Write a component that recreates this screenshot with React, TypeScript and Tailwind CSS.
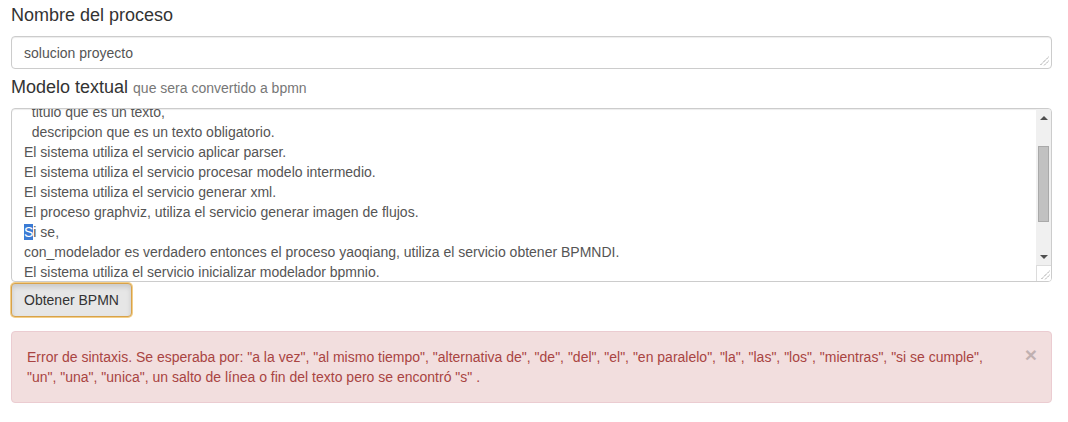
import React from "react";

const lines: React.ReactNode[] = [
  "  titulo que es un texto,",
  "  descripcion que es un texto obligatorio.",
  "El sistema utiliza el servicio aplicar parser.",
  "El sistema utiliza el servicio procesar modelo intermedio.",
  "El sistema utiliza el servicio generar xml.",
  "El proceso graphviz, utiliza el servicio generar imagen de flujos.",
  <>
    <span className="bg-[#3b7bd4] text-white">S</span>i se,
  </>,
  "con_modelador es verdadero entonces el proceso yaoqiang, utiliza el servicio obtener BPMNDI.",
  "El sistema utiliza el servicio inicializar modelador bpmnio.",
];

function ResizeGrip() {
  return (
    <svg width="10" height="10" viewBox="0 0 10 10" className="block">
      <line x1="9.5" y1="1" x2="1" y2="9.5" stroke="#8a8a8a" strokeWidth="1" strokeDasharray="1.2 0.8" />
      <line x1="9.5" y1="5" x2="5" y2="9.5" stroke="#8a8a8a" strokeWidth="1" strokeDasharray="1.2 0.8" />
    </svg>
  );
}

export default function App() {
  return (
    <div
      className="w-[1068px] h-[422px] bg-white pl-[11px] pr-[16px] text-[14px] leading-[20px] text-[#333]"
      style={{ fontFamily: '"Liberation Sans", Arial, sans-serif' }}
    >
      <div className="pt-[5px] text-[18px] leading-[20px] text-[#333]">Nombre del proceso</div>
      <div className="mt-[11px] h-[33px] border border-[#ccc] rounded-[4px] relative flex items-center px-[12px] text-[#555] shadow-[inset_0_1px_1px_rgba(0,0,0,0.075)]">
        solucion proyecto
        <div className="absolute right-[2px] bottom-[2px]">
          <ResizeGrip />
        </div>
      </div>
      <div className="mt-[8px] h-[20px] flex items-baseline gap-[5px] overflow-visible">
        <span className="text-[18px] leading-[20px]">Modelo textual</span>
        <span className="text-[14px] leading-[20px] text-[#777]">que sera convertido a bpmn</span>
      </div>
      <div className="mt-[11px] h-[174px] border border-[#ccc] rounded-[4px] flex overflow-hidden shadow-[inset_0_1px_1px_rgba(0,0,0,0.075)]">
        <div className="flex-1 overflow-hidden pl-[12px] text-[#555]">
          <div className="mt-[-7px]">
            {lines.map((l, i) => (
              <div key={i} className="h-[20px] whitespace-pre">
                {l}
              </div>
            ))}
          </div>
        </div>
        <div className="w-[15px] flex flex-col bg-[#f0f0f0]">
          <div className="h-[16px] flex items-center justify-center pt-[2px]">
            <div className="w-0 h-0 border-l-[4px] border-r-[4px] border-b-[4px] border-l-transparent border-r-transparent border-b-[#505050]" />
          </div>
          <div className="mt-[21px] mx-[2px] h-[76px] bg-[#c1c1c1] border border-[#a9a9a9]" />
          <div className="flex-1" />
          <div className="h-[16px] flex items-center justify-center">
            <div className="w-0 h-0 border-l-[4px] border-r-[4px] border-t-[4px] border-l-transparent border-r-transparent border-t-[#505050]" />
          </div>
          <div className="h-[16px] bg-white border-t border-l border-[#dcdcdc] flex items-end justify-end pr-[1px] pb-[1px]">
            <ResizeGrip />
          </div>
        </div>
      </div>
      <button className="mt-[1px] h-[34px] px-[12px] bg-[#e6e6e6] border border-[#d8a24a] rounded-[4px] text-[#333] text-[14px] leading-[20px] shadow-[0_0_0_1px_#f3cf8a,inset_0_3px_5px_rgba(0,0,0,0.125)]">
        Obtener BPMN
      </button>
      <div className="mt-[14px] relative border border-[#ebccd1] bg-[#f2dede] rounded-[4px] pt-[15px] pb-[15px] pl-[15px] pr-[35px] text-[#a94442]">
        <span className="absolute right-[14px] top-[12px] text-[21px] leading-[21px] font-bold text-[#000] opacity-20">×</span>
        Error de sintaxis. Se esperaba por: "a la vez", "al mismo tiempo", "alternativa de", "de", "del", "el", "en paralelo", "la", "las", "los", "mientras", "si se cumple",
        <br />
        "un", "una", "unica", un salto de línea o fin del texto pero se encontró "s" .
      </div>
    </div>
  );
}
